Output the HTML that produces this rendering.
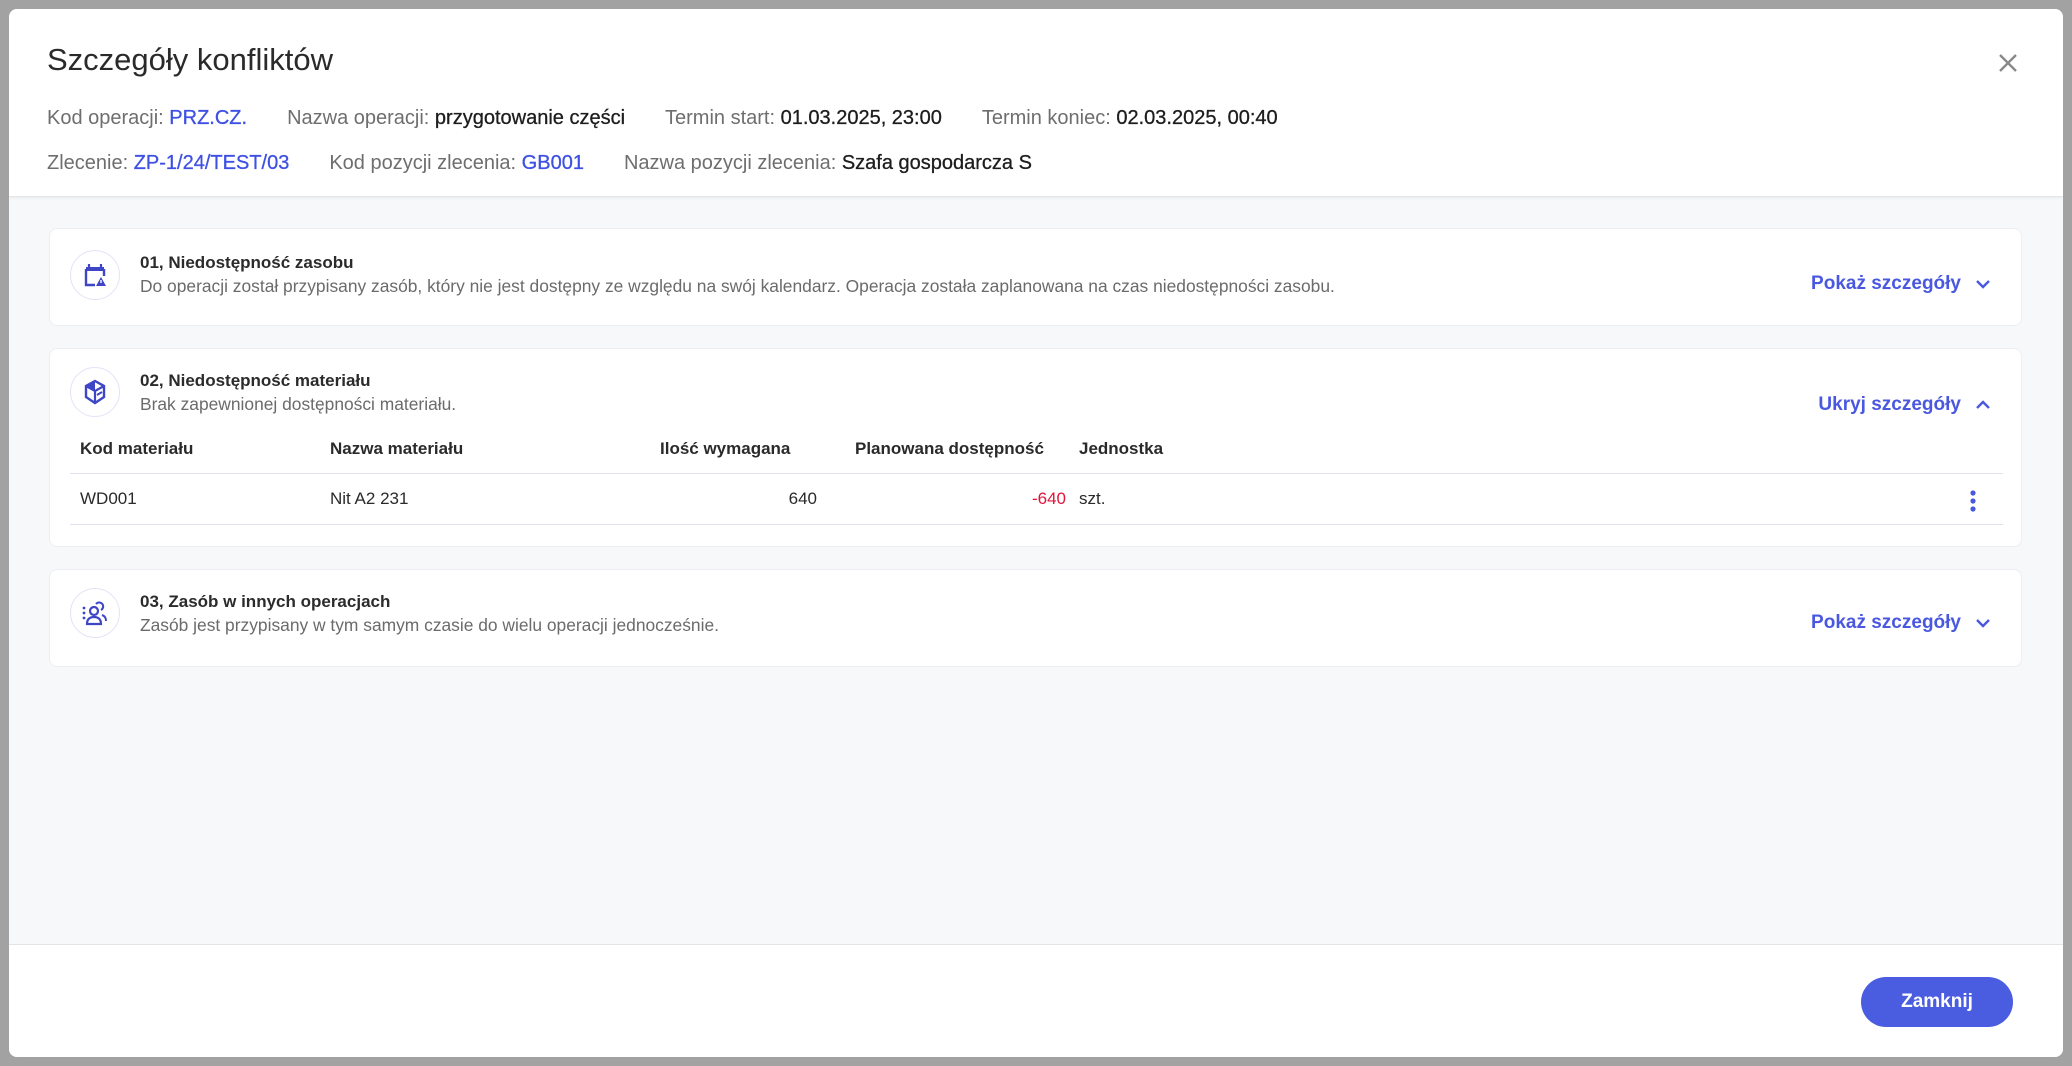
<!DOCTYPE html>
<html><head><meta charset="utf-8"><style>
*{box-sizing:border-box;margin:0;padding:0}
body{width:2072px;height:1066px;background:#a2a2a2;font-family:"Liberation Sans",sans-serif;position:relative;overflow:hidden;color:#222}
.modal{position:absolute;left:9px;top:9px;width:2054px;height:1048px;background:#f7f8fa;border-radius:8px;overflow:hidden}
.head{position:absolute;left:0;top:0;width:100%;height:188px;background:#fff;border-bottom:1px solid #e3e4e8;box-shadow:0 1px 3px rgba(0,0,0,.06)}
.title{position:absolute;left:38px;top:33px;font-size:31px;color:#2a2a2a}
.row{position:absolute;left:38px;font-size:20px;color:#6e6e6e;white-space:nowrap}
.row span{margin-right:40px}
.row b{font-weight:normal;color:#1d1d1d;-webkit-text-stroke:.3px #1d1d1d}
.row a{color:#3f51e3;text-decoration:none;-webkit-text-stroke:.3px #3f51e3}
.close{position:absolute;left:1989px;top:44px}
.card{position:absolute;left:40px;width:1973px;background:#fff;border:1px solid #eceef2;border-radius:8px}
.ic{position:absolute;left:20px;width:50px;height:50px;border:1.5px solid #e3e3f7;border-radius:50%;display:flex;align-items:center;justify-content:center}
.ct{position:absolute;left:90px;font-size:17px;font-weight:bold;color:#2b2b2b}
.cd{position:absolute;left:90px;font-size:17.4px;color:#6b6b6b;white-space:nowrap}
.tog{position:absolute;right:30px;font-size:19px;font-weight:bold;color:#4a58e0;display:flex;align-items:center;gap:14px}
.th{position:absolute;font-size:17px;font-weight:bold;color:#2a2a2a;white-space:nowrap}
.td{position:absolute;font-size:17px;color:#2a2a2a;white-space:nowrap}
.line{position:absolute;left:20px;width:1933px;height:1px;background:#e0e2f0}
.foot{position:absolute;left:0;top:935px;width:100%;height:113px;background:#fff;border-top:1px solid #e3e4e8}
.btn{position:absolute;left:1852px;top:32px;width:152px;height:50px;border-radius:25px;background:#4a5de0;color:#fff;font-weight:bold;font-size:19px;display:flex;align-items:center;justify-content:center}
</style></head><body>
<div class="modal">
 <div class="head">
  <div class="title">Szczegóły konfliktów</div>
  <svg class="close" width="20" height="20" viewBox="0 0 20 20"><path d="M2 2L18 18M18 2L2 18" stroke="#8a8a8a" stroke-width="2.4"/></svg>
  <div class="row" style="top:98px"><span>Kod operacji: <a>PRZ.CZ.</a></span><span>Nazwa operacji: <b>przygotowanie części</b></span><span>Termin start: <b>01.03.2025, 23:00</b></span><span>Termin koniec: <b>02.03.2025, 00:40</b></span></div>
  <div class="row" style="top:143px"><span>Zlecenie: <a>ZP-1/24/TEST/03</a></span><span>Kod pozycji zlecenia: <a>GB001</a></span><span>Nazwa pozycji zlecenia: <b>Szafa gospodarcza S</b></span></div>
 </div>

 <div class="card" style="top:219px;height:98px">
  <div class="ic" style="top:21px"><svg width="28" height="28" viewBox="0 0 28 28"><path d="M5 6h18v4H5z" fill="#3e46c6"/><path d="M8 3v5M20 3v5" stroke="#3e46c6" stroke-width="2.2"/><path d="M5 8v16h9M23 8v7" stroke="#3e46c6" stroke-width="2.4" fill="none"/><path d="M20 16l5 9h-10z" fill="#3e46c6"/><path d="M20 19v3" stroke="#fff" stroke-width="1.4"/></svg></div>
  <div class="ct" style="top:24px">01, Niedostępność zasobu</div>
  <div class="cd" style="top:47px">Do operacji został przypisany zasób, który nie jest dostępny ze względu na swój kalendarz. Operacja została zaplanowana na czas niedostępności zasobu.</div>
  <div class="tog" style="top:44px">Pokaż szczegóły <svg width="16" height="10" viewBox="0 0 16 10"><path d="M2 2l6 6 6-6" stroke="#4a58e0" stroke-width="2.4" fill="none"/></svg></div>
 </div>

 <div class="card" style="top:339px;height:199px">
  <div class="ic" style="top:18px"><svg width="28" height="28" viewBox="0 0 28 28"><path d="M14 3L23 8v11l-9 6-9-6V8z" fill="none" stroke="#3e46c6" stroke-width="2.4"/><path d="M5 8l9 5 9-5M14 13v12" stroke="#3e46c6" stroke-width="2.2" fill="none"/><path d="M5 8l9-5v10z" fill="#3e46c6"/><path d="M16 17l5-3" stroke="#3e46c6" stroke-width="2"/></svg></div>
  <div class="ct" style="top:22px">02, Niedostępność materiału</div>
  <div class="cd" style="top:45px">Brak zapewnionej dostępności materiału.</div>
  <div class="tog" style="top:45px">Ukryj szczegóły <svg width="16" height="10" viewBox="0 0 16 10"><path d="M2 8l6-6 6 6" stroke="#4a58e0" stroke-width="2.4" fill="none"/></svg></div>
  <div class="th" style="left:30px;top:90px">Kod materiału</div>
  <div class="th" style="left:280px;top:90px">Nazwa materiału</div>
  <div class="th" style="left:610px;top:90px">Ilość wymagana</div>
  <div class="th" style="left:805px;top:90px">Planowana dostępność</div>
  <div class="th" style="left:1029px;top:90px">Jednostka</div>
  <div class="line" style="top:124px"></div>
  <div class="td" style="left:30px;top:140px">WD001</div>
  <div class="td" style="left:280px;top:140px">Nit A2 231</div>
  <div class="td" style="right:1204px;top:140px">640</div>
  <div class="td" style="right:955px;top:140px;color:#e0153a">-640</div>
  <div class="td" style="left:1029px;top:140px">szt.</div>
  <svg style="position:absolute;left:1919px;top:140px" width="8" height="24" viewBox="0 0 8 24"><circle cx="4" cy="4" r="2.6" fill="#4a58e0"/><circle cx="4" cy="12" r="2.6" fill="#4a58e0"/><circle cx="4" cy="20" r="2.6" fill="#4a58e0"/></svg>
  <div class="line" style="top:175px"></div>
 </div>

 <div class="card" style="top:560px;height:98px">
  <div class="ic" style="top:18px"><svg width="30" height="30" viewBox="0 0 30 30"><circle cx="4" cy="10" r="1.4" fill="#3e46c6"/><circle cx="4" cy="15" r="1.4" fill="#3e46c6"/><circle cx="4" cy="20" r="1.4" fill="#3e46c6"/><circle cx="14" cy="13" r="4" fill="none" stroke="#3e46c6" stroke-width="2.2"/><path d="M7 26c0-5 3-7 7-7s7 2 7 7z" fill="none" stroke="#3e46c6" stroke-width="2.2"/><path d="M16 6a4 4 0 1 1 5 6M22 17c3 1 4 3 4 6" fill="none" stroke="#3e46c6" stroke-width="2"/></svg></div>
  <div class="ct" style="top:22px">03, Zasób w innych operacjach</div>
  <div class="cd" style="top:45px">Zasób jest przypisany w tym samym czasie do wielu operacji jednocześnie.</div>
  <div class="tog" style="top:42px">Pokaż szczegóły <svg width="16" height="10" viewBox="0 0 16 10"><path d="M2 2l6 6 6-6" stroke="#4a58e0" stroke-width="2.4" fill="none"/></svg></div>
 </div>

 <div class="foot"><div class="btn">Zamknij</div></div>
</div>
</body></html>
